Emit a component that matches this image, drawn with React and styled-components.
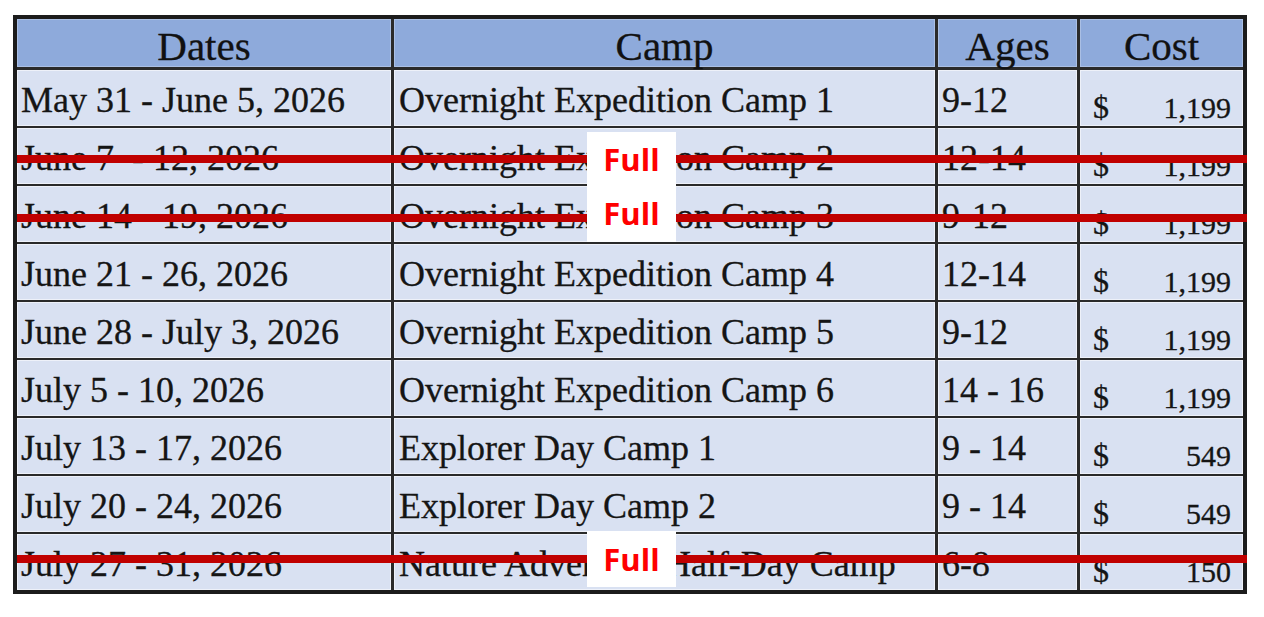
import React from "react";
import styled, { createGlobalStyle } from "styled-components";

const GlobalStyle = createGlobalStyle`
  html, body { margin: 0; padding: 0; background: #ffffff; }
  body { font-family: "Liberation Serif", "Times New Roman", serif; }
`;

const Page = styled.div`
  padding: 15px 0 0 13px;
`;

const Table = styled.div`
  display: flex;
  flex-direction: column;
  gap: 2px;
  width: 1226px;
  border: 4px solid #1c1c1c;
  background: #2a2a2a;
`;

const Row = styled.div`
  position: relative;
  display: grid;
  grid-template-columns: 374px 541px 139px 163px;
  column-gap: 3px;
  height: ${(p) => (p.$header ? "47px" : "56px")};
  margin-bottom: ${(p) => (p.$header ? "2px" : "0")};
`;

const HeadCell = styled.div`
  background: #8eaadb;
  box-shadow: inset 0 0 0 1px rgba(255, 255, 255, 0.25);
  display: flex;
  align-items: center;
  justify-content: center;
  padding-top: 7px;
  font-size: 41px;
  color: #111;
  line-height: 1;
  -webkit-text-stroke: 0.3px #111;
`;

const Cell = styled.div`
  background: #d9e1f2;
  box-shadow: inset 0 0 0 1px rgba(255, 255, 255, 0.55);
  display: flex;
  align-items: center;
  padding: 3px 0 0 ${(p) => p.$pad || 4}px;
  font-size: 36px;
  color: #151515;
  white-space: nowrap;
  overflow: hidden;
  -webkit-text-stroke: 0.3px #151515;
`;

const CostCell = styled.div`
  background: #d9e1f2;
  box-shadow: inset 0 0 0 1px rgba(255, 255, 255, 0.55);
  display: flex;
  align-items: flex-end;
  justify-content: space-between;
  padding: 0 12px 3px 13px;
  font-size: 30px;
  line-height: 1;
  color: #151515;
  -webkit-text-stroke: 0.3px #151515;
`;

const Dollar = styled.span`
  font-size: 32px;
`;

const Strike = styled.div`
  position: absolute;
  left: 0;
  right: -4px;
  top: ${(p) => p.$y}px;
  height: 8px;
  background: #c00000;
  z-index: 1;
`;

const FullTag = styled.div`
  position: absolute;
  left: 570px;
  width: 89px;
  top: ${(p) => p.$top}px;
  height: ${(p) => p.$h}px;
  background: #ffffff;
  z-index: 2;
  display: flex;
  align-items: center;
  justify-content: center;
  font-family: "Open Sans", "Noto Sans", sans-serif;
  font-weight: 700;
  font-size: 31px;
  color: #ff0000;
  box-sizing: border-box;
`;

const rows = [
  { d: "May 31 - June 5, 2026", c: "Overnight Expedition Camp 1", a: "9-12", p: "1,199" },
  { d: "June 7\u00a0 - 12, 2026", c: "Overnight Expedition Camp 2", a: "12-14", p: "1,199", full: { y: 27, top: 4, h: 54 } },
  { d: "June 14 - 19, 2026", c: "Overnight Expedition Camp 3", a: "9-12", p: "1,199", full: { y: 28, top: -2, h: 58 } },
  { d: "June 21 - 26, 2026", c: "Overnight Expedition Camp 4", a: "12-14", p: "1,199" },
  { d: "June 28 - July 3, 2026", c: "Overnight Expedition Camp 5", a: "9-12", p: "1,199" },
  { d: "July 5 - 10, 2026", c: "Overnight Expedition Camp 6", a: "14 - 16", p: "1,199" },
  { d: "July 13 - 17, 2026", c: "Explorer Day Camp 1", a: "9 - 14", p: "549" },
  { d: "July 20 - 24, 2026", c: "Explorer Day Camp 2", a: "9 - 14", p: "549" },
  { d: "July 27 - 31, 2026", c: "Nature Adventure Half-Day Camp", a: "6-8", p: "150", full: { y: 21, top: -3, h: 56 } },
];

export default function App() {
  return (
    <>
      <GlobalStyle />
      <Page>
        <Table>
          <Row $header>
            <HeadCell>Dates</HeadCell>
            <HeadCell>Camp</HeadCell>
            <HeadCell>Ages</HeadCell>
            <HeadCell>Cost</HeadCell>
          </Row>
          {rows.map((r, i) => (
            <Row key={i}>
              <Cell $pad={4}>{r.d}</Cell>
              <Cell $pad={5}>{r.c}</Cell>
              <Cell $pad={4}>{r.a}</Cell>
              <CostCell>
                <Dollar>$</Dollar>
                <span>{r.p}</span>
              </CostCell>
              {r.full && (
                <>
                  <Strike $y={r.full.y} />
                  <FullTag $top={r.full.top} $h={r.full.h}>
                    Full
                  </FullTag>
                </>
              )}
            </Row>
          ))}
        </Table>
      </Page>
    </>
  );
}
